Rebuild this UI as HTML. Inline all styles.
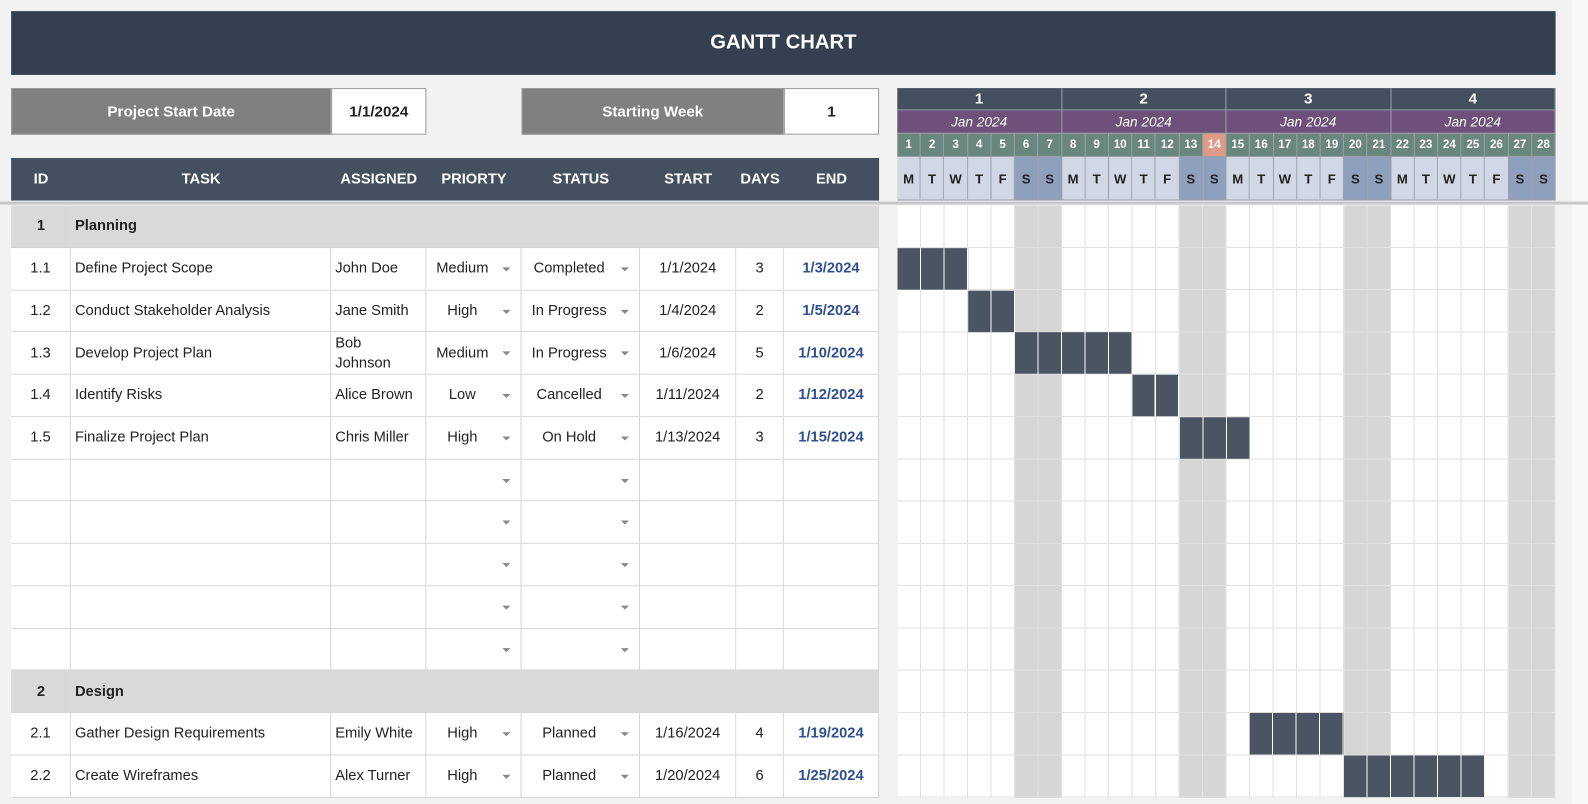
<!DOCTYPE html>
<html><head><meta charset="utf-8"><style>
*{box-sizing:border-box;margin:0;padding:0}
body{width:1588px;height:794px;background:#f2f2f2;font-family:"Liberation Sans",sans-serif;position:relative;overflow:hidden;color:#222}
#wrap{position:absolute;left:0;top:0;width:1568px;height:784px;transform:scale(1.01276);transform-origin:0 0}
.abs{position:absolute}
.title{left:11px;top:11px;width:1525px;height:63px;background:#344050;color:#fff;font-weight:bold;font-size:20px;display:flex;align-items:center;justify-content:center}
.lbl{background:#808080;color:#fff;font-weight:bold;font-size:15px;display:flex;align-items:center;justify-content:center;height:46px;top:87px;border:1px solid #9a9a9a}
.val{background:#fff;font-weight:bold;font-size:15px;display:flex;align-items:center;justify-content:center;height:46px;top:87px;border:1px solid #9a9a9a}
.grid{display:grid;grid-template-columns:59px 257px 94px 94px 117px 95px 47px 94px;left:11px;width:857px}
.hdr{top:156px;height:42px;background:#44505f;color:#fff;font-weight:bold;font-size:14.5px}
.hdr div{display:flex;align-items:center;justify-content:center}
.body{top:203px;grid-auto-rows:41.75px;font-size:14.5px}
.body div{background:#fff;border-right:1px solid #d4d4d4;border-bottom:1px solid #d4d4d4;display:flex;align-items:center;justify-content:center;position:relative}
.body div.l{justify-content:flex-start;padding-left:4px}
.body div.g{background:#d9d9d9;border-right:none;font-weight:bold}
.body div.gs{grid-column:span 7}
.body div.e{color:#2f4f8f;font-weight:bold}
.body div.dd{padding-right:22px}
.body div.dd::after{content:"";position:absolute;right:10px;top:19px;border-left:4px solid transparent;border-right:4px solid transparent;border-top:4px solid #888}
.sep{left:0;top:199px;width:1588px;height:3px;background:#c8c8c8}
.gh{left:886px;width:650px;display:flex}
.gh div{flex:1;display:flex;align-items:center;justify-content:center;border-right:1px solid #9aa0a8;border-bottom:1px solid #9aa0a8}
.wk{top:87px;height:22px;background:#44505f;color:#fff;font-weight:bold;font-size:15px}
.mo{top:109px;height:23px;background:#6e507a;color:#fff;font-style:italic;font-size:13.5px}
.dn{top:132px;height:23px;background:#6a877e;color:#fff;font-weight:bold;font-size:11.5px}
.dn div.hl{background:#e09a88}
.dl{top:155px;height:43px;font-weight:bold;font-size:13px;color:#222}
.dl div{background:#d1d7e4}
.dl div.w{background:#8ea0bb}
.gb{left:886px;top:203px;width:650px;height:585px;
background:
repeating-linear-gradient(to bottom,transparent 0,transparent 40.75px,#e2e2e2 40.75px,#e2e2e2 41.75px),
repeating-linear-gradient(to right,transparent 0,transparent 22.214px,#e2e2e2 22.214px,#e2e2e2 23.214px),
linear-gradient(to right,#fff 0,#fff 116.07px,#d6d6d6 116.07px,#d6d6d6 162.5px);
background-size:auto,auto,162.5px 100%}
.bar{position:absolute;height:41px;background:repeating-linear-gradient(to right,#4a5462 0,#4a5462 22.2px,#fff 22.2px,#fff 23.2px)}
.rs{left:1552px;top:0;width:40px;height:794px;background:#f7f7f7}
</style></head><body>
<div id="wrap">
<div class="abs rs"></div>
<div class="abs title">GANTT CHART</div>
<div class="abs lbl" style="left:11px;width:316px">Project Start Date</div>
<div class="abs val" style="left:327px;width:94px">1/1/2024</div>
<div class="abs lbl" style="left:515px;width:259px">Starting Week</div>
<div class="abs val" style="left:774px;width:94px">1</div>

<div class="abs grid hdr"><div>ID</div><div>TASK</div><div>ASSIGNED</div><div>PRIORTY</div><div>STATUS</div><div>START</div><div>DAYS</div><div>END</div></div>
<div class="abs sep"></div>

<div class="abs grid body">
<div class="g">1</div><div class="g l gs">Planning</div>
<div>1.1</div><div class="l">Define Project Scope</div><div class="l">John Doe</div><div class="dd">Medium</div><div class="dd">Completed</div><div>1/1/2024</div><div>3</div><div class="e">1/3/2024</div>
<div>1.2</div><div class="l">Conduct Stakeholder Analysis</div><div class="l">Jane Smith</div><div class="dd">High</div><div class="dd">In Progress</div><div>1/4/2024</div><div>2</div><div class="e">1/5/2024</div>
<div>1.3</div><div class="l">Develop Project Plan</div><div class="l" style="line-height:20px">Bob<br>Johnson</div><div class="dd">Medium</div><div class="dd">In Progress</div><div>1/6/2024</div><div>5</div><div class="e">1/10/2024</div>
<div>1.4</div><div class="l">Identify Risks</div><div class="l">Alice Brown</div><div class="dd">Low</div><div class="dd">Cancelled</div><div>1/11/2024</div><div>2</div><div class="e">1/12/2024</div>
<div>1.5</div><div class="l">Finalize Project Plan</div><div class="l">Chris Miller</div><div class="dd">High</div><div class="dd">On Hold</div><div>1/13/2024</div><div>3</div><div class="e">1/15/2024</div>
<div></div><div></div><div></div><div class="dd"></div><div class="dd"></div><div></div><div></div><div></div>
<div></div><div></div><div></div><div class="dd"></div><div class="dd"></div><div></div><div></div><div></div>
<div></div><div></div><div></div><div class="dd"></div><div class="dd"></div><div></div><div></div><div></div>
<div></div><div></div><div></div><div class="dd"></div><div class="dd"></div><div></div><div></div><div></div>
<div></div><div></div><div></div><div class="dd"></div><div class="dd"></div><div></div><div></div><div></div>
<div class="g">2</div><div class="g l gs">Design</div>
<div>2.1</div><div class="l">Gather Design Requirements</div><div class="l">Emily White</div><div class="dd">High</div><div class="dd">Planned</div><div>1/16/2024</div><div>4</div><div class="e">1/19/2024</div>
<div>2.2</div><div class="l">Create Wireframes</div><div class="l">Alex Turner</div><div class="dd">High</div><div class="dd">Planned</div><div>1/20/2024</div><div>6</div><div class="e">1/25/2024</div>
</div>

<div class="abs gh wk"><div>1</div><div>2</div><div>3</div><div>4</div></div>
<div class="abs gh mo"><div>Jan 2024</div><div>Jan 2024</div><div>Jan 2024</div><div>Jan 2024</div></div>
<div class="abs gh dn"><div>1</div><div>2</div><div>3</div><div>4</div><div>5</div><div>6</div><div>7</div><div>8</div><div>9</div><div>10</div><div>11</div><div>12</div><div>13</div><div class="hl">14</div><div>15</div><div>16</div><div>17</div><div>18</div><div>19</div><div>20</div><div>21</div><div>22</div><div>23</div><div>24</div><div>25</div><div>26</div><div>27</div><div>28</div></div>
<div class="abs gh dl"><div>M</div><div>T</div><div>W</div><div>T</div><div>F</div><div class="w">S</div><div class="w">S</div><div>M</div><div>T</div><div>W</div><div>T</div><div>F</div><div class="w">S</div><div class="w">S</div><div>M</div><div>T</div><div>W</div><div>T</div><div>F</div><div class="w">S</div><div class="w">S</div><div>M</div><div>T</div><div>W</div><div>T</div><div>F</div><div class="w">S</div><div class="w">S</div></div>

<div class="abs gb">
<div class="bar" style="left:0;width:69.6px;top:41.75px"></div>
<div class="bar" style="left:69.6px;width:46.4px;top:83.5px"></div>
<div class="bar" style="left:116.1px;width:116px;top:125.25px"></div>
<div class="bar" style="left:232.1px;width:46.4px;top:167px"></div>
<div class="bar" style="left:278.6px;width:69.6px;top:208.75px"></div>
<div class="bar" style="left:348.2px;width:92.9px;top:501px"></div>
<div class="bar" style="left:441.1px;width:139.3px;top:542.75px"></div>
</div>
</div>
</body></html>
